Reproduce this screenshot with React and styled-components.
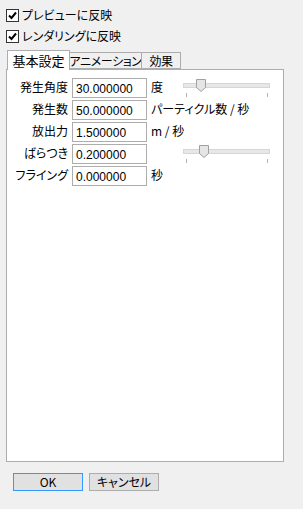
import React from 'react'
import styled, { createGlobalStyle } from 'styled-components'

const Global = createGlobalStyle`
  html, body {
    margin: 0;
    padding: 0;
    background: #f0f0f0;
  }
  body {
    font-family: "Noto Sans CJK JP", "Liberation Sans", sans-serif;
    font-size: 12px;
    font-feature-settings: "palt";
    color: #000;
  }
`

const Dialog = styled.div`
  width: 303px;
  height: 509px;
  background: #f0f0f0;
  box-sizing: border-box;
  padding: 8px 19px 0 6px;
`

const CheckRow = styled.label`
  display: flex;
  align-items: center;
  height: 14px;
  margin-bottom: 7px;
  gap: 3px;
  line-height: 14px;
`

const Box = styled.span`
  width: 11px;
  height: 11px;
  border: 1px solid #333;
  background: #fff;
  display: flex;
  align-items: center;
  justify-content: center;
`

const Tabs = styled.div`
  display: flex;
  align-items: flex-end;
  margin-top: 7px;
  height: 19px;
  padding-left: 1px;
  position: relative;
  z-index: 1;
`

const Tab = styled.div`
  box-sizing: border-box;
  height: ${p => (p.active ? '20px' : '17px')};
  width: ${p => p.w}px;
  border: 1px solid #adadad;
  border-bottom: ${p => (p.active ? 'none' : '1px solid #adadad')};
  background: ${p => (p.active ? '#fff' : '#f0f0f0')};
  margin-bottom: ${p => (p.active ? '-1px' : '0')};
  margin-left: ${p => (p.first ? '0' : '-1px')};
  display: flex;
  justify-content: center;
  align-items: center;
  white-space: nowrap;
  line-height: 14px;
  font-size: ${p => (p.active ? '13px' : '12px')};
  letter-spacing: ${p => (p.active ? '0' : '-0.4px')};
  padding-top: ${p => (p.active ? '0' : '1px')};
`

const Panel = styled.div`
  box-sizing: border-box;
  height: 393px;
  border: 1px solid #adadad;
  background: #fff;
  padding: 8px 0 0 0;
`

const Form = styled.div`
  display: grid;
  grid-template-columns: 61px 75px 28px 90px;
  grid-auto-rows: 22px;
  column-gap: 4px;
`

const Label = styled.div`
  text-align: right;
  line-height: 18px;
  white-space: nowrap;
`

const Field = styled.input`
  box-sizing: border-box;
  width: 75px;
  height: 20px;
  border: 1px solid #adadad;
  padding: 2px 3px 0;
  font-family: "Liberation Sans", sans-serif;
  font-size: 12px;
  color: #000;
  outline: none;
  background: #fff;
`

const Unit = styled.div`
  line-height: 18px;
  white-space: nowrap;
  grid-column: ${p => (p.wide ? 'span 2' : 'auto')};
`

const Slider = styled.div`
  position: relative;
  width: 88px;
  height: 22px;
`

const Track = styled.div`
  position: absolute;
  left: 0;
  right: 1px;
  top: 5px;
  height: 3px;
  background: #e7e7e7;
  border: 1px solid #d6d6d6;
`

const Thumb = styled.svg`
  position: absolute;
  top: 1px;
  left: ${p => p.pos}px;
`

const Tick = styled.div`
  position: absolute;
  top: 15px;
  left: ${p => p.x}px;
  width: 1px;
  height: 4px;
  background: #b4b4b4;
`

const Buttons = styled.div`
  display: flex;
  gap: 6px;
  margin-top: 11px;
  padding-left: 7px;
`

const Button = styled.button`
  box-sizing: border-box;
  width: 70px;
  height: 18px;
  border: 1px solid ${p => (p.primary ? '#3399ff' : '#adadad')};
  background: #e1e1e1;
  font-family: "Noto Sans CJK JP", "Liberation Sans", sans-serif;
  font-feature-settings: "palt";
  font-size: 12px;
  color: #000;
  padding: 0;
  line-height: 14px;
`

function Check({ children }) {
  return (
    <CheckRow>
      <Box>
        <svg width="9" height="9" viewBox="0 0 9 9">
          <path d="M1 4.5 L3.5 7 L8 1.5" stroke="#000" strokeWidth="2" fill="none" />
        </svg>
      </Box>
      {children}
    </CheckRow>
  )
}

function TrackBar({ pos }) {
  return (
    <Slider>
      <Track />
      <Thumb pos={pos} width="10" height="13" viewBox="0 0 10 13">
        <path d="M0.5 0.5 H9.5 V8.5 L5 12.5 L0.5 8.5 Z" fill="#e5e5e5" stroke="#a0a0a0" />
      </Thumb>
      <Tick x={3} />
      <Tick x={84} />
    </Slider>
  )
}

const rows = [
  { label: '発生角度', value: '30.000000', unit: '度', slider: 13 },
  { label: '発生数', value: '50.000000', unit: 'パーティクル数 / 秒', wide: true },
  { label: '放出力', value: '1.500000', unit: 'm / 秒' },
  { label: 'ばらつき', value: '0.200000', unit: '', slider: 16 },
  { label: 'フライング', value: '0.000000', unit: '秒' },
]

export default function App() {
  return (
    <Dialog>
      <Global />
      <Check>プレビューに反映</Check>
      <Check>レンダリングに反映</Check>
      <Tabs>
        <Tab active first w={63}>基本設定</Tab>
        <Tab w={73}>アニメーション</Tab>
        <Tab w={40}>効果</Tab>
      </Tabs>
      <Panel>
        <Form>
          {rows.map(r => (
            <React.Fragment key={r.label}>
              <Label>{r.label}</Label>
              <Field defaultValue={r.value} />
              <Unit wide={r.wide}>{r.unit}</Unit>
              {!r.wide && (r.slider ? <TrackBar pos={r.slider} /> : <div />)}
            </React.Fragment>
          ))}
        </Form>
      </Panel>
      <Buttons>
        <Button primary>OK</Button>
        <Button>キャンセル</Button>
      </Buttons>
    </Dialog>
  )
}
